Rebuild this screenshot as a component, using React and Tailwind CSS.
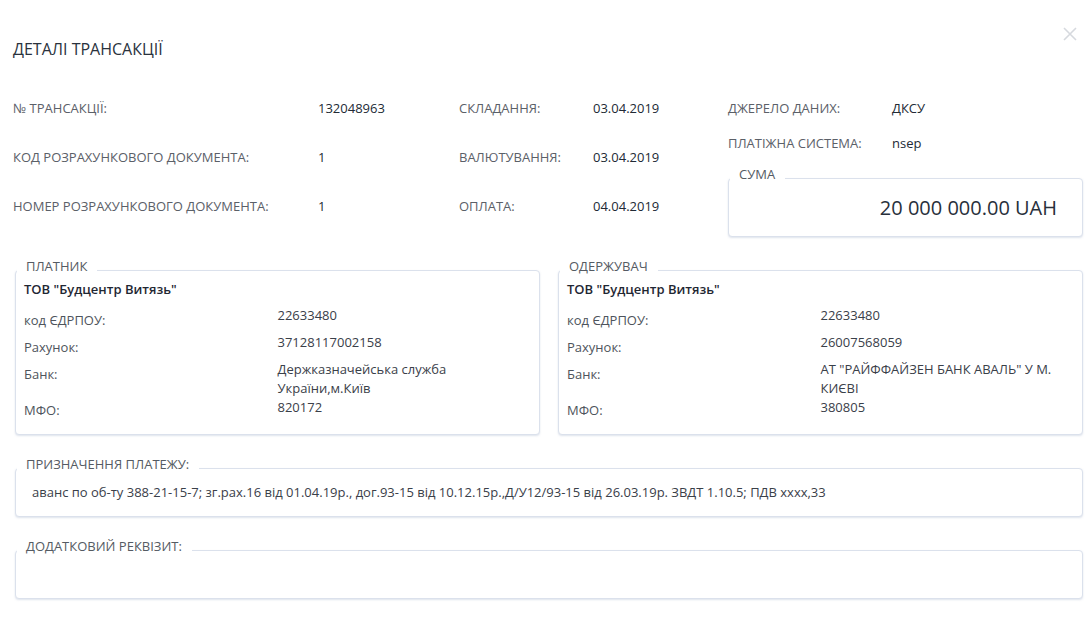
import React from "react";

const font = { fontFamily: "'Open Sans', 'Noto Sans', sans-serif" };

// boxed group with a caption over the top border
const Box = ({ title, className = "", children }) => (
  <div className={`relative rounded-[4px] border border-[#dbe1ec] shadow-[0_1px_2px_rgba(160,175,200,0.35)] bg-white ${className}`}>
    <span className="absolute -top-[14px] left-[1px] bg-white pl-[9px] pr-[10px] text-[13px] leading-[19px] text-[#555b63]">
      {title}
    </span>
    {children}
  </div>
);

const TopRow = ({ label, value, labelW, h = "h-[49px]" }) => (
  <div className={`flex items-center ${h}`}>
    <span className={`${labelW} shrink-0 text-[13px] text-[#5b6068]`}>{label}</span>
    <span className="text-[13px] text-[#222a35]">{value}</span>
  </div>
);

const Party = ({ title, name, rows }) => (
  <Box title={title} className="flex-1 h-[165px] pt-[9px] px-[8px]">
    <div className="text-[13px] leading-[19px] font-semibold text-[#1f2733]">{name}</div>
    <div className="mt-[7px]">
      {rows.map((r, i) => (
        <div key={i} className={`grid grid-cols-2 ${r.h}`}>
          <span className={`text-[13px] leading-[19px] text-[#4e545c] ${r.pt}`}>{r.label}</span>
          <span className="text-[13px] leading-[19px] text-[#3a4049]">{r.value}</span>
        </div>
      ))}
    </div>
  </Box>
);

const App = () => {
  return (
    <div className="w-[1089px] h-[625px] bg-white relative" style={font}>
      {/* close */}
      <button className="absolute right-[12px] top-[27px] text-[#d6d9de]">
        <svg width="14" height="14" viewBox="0 0 14 14" stroke="currentColor" strokeWidth="1.6">
          <path d="M1 1 L13 13 M13 1 L1 13" />
        </svg>
      </button>

      <div className="pt-[39px] pl-[13px] text-[16px] leading-[20px] text-[#2a323d]">ДЕТАЛІ ТРАНСАКЦІЇ</div>

      {/* summary */}
      <div className="flex items-start mt-[26px] pl-[13px] pr-[6px]">
        <div className="w-[446px]">
          <TopRow label="№ ТРАНСАКЦІЇ:" value="132048963" labelW="w-[305px]" h="h-[48px]" />
          <TopRow label="КОД РОЗРАХУНКОВОГО ДОКУМЕНТА:" value="1" labelW="w-[305px]" h="h-[49px]" />
          <TopRow label="НОМЕР РОЗРАХУНКОВОГО ДОКУМЕНТА:" value="1" labelW="w-[305px]" h="h-[50px]" />
        </div>
        <div className="w-[268px]">
          <TopRow label="СКЛАДАННЯ:" value="03.04.2019" labelW="w-[134px]" h="h-[48px]" />
          <TopRow label="ВАЛЮТУВАННЯ:" value="03.04.2019" labelW="w-[134px]" h="h-[49px]" />
          <TopRow label="ОПЛАТА:" value="04.04.2019" labelW="w-[134px]" h="h-[50px]" />
        </div>
        <div className="flex-1 pl-[1px]">
          <TopRow label="ДЖЕРЕЛО ДАНИХ:" value="ДКСУ" labelW="w-[164px]" h="h-[48px]" />
          <TopRow label="ПЛАТІЖНА СИСТЕМА:" value="nsep" labelW="w-[164px]" h="h-[22px]" />
          <Box title="СУМА" className="mt-[23px] h-[59px] flex items-center justify-end pr-[25px]">
            <span className="text-[20px] text-[#28303b]">20 000 000.00 UAH</span>
          </Box>
        </div>
      </div>

      {/* parties */}
      <div className="flex gap-[18px] mt-[33px] pl-[15px] pr-[6px]">
        <Party
          title="ПЛАТНИК"
          name='ТОВ "Будцентр Витязь"'
          rows={[
            { label: "код ЄДРПОУ:", value: "22633480", h: "h-[27px]", pt: "pt-[5px]" },
            { label: "Рахунок:", value: "37128117002158", h: "h-[27px]", pt: "pt-[5px]" },
            { label: "Банк:", value: "Держказначейська служба України,м.Київ", h: "h-[38px]", pt: "pt-[5px]" },
            { label: "МФО:", value: "820172", h: "h-[27px]", pt: "pt-[3px]" },
          ]}
        />
        <Party
          title="ОДЕРЖУВАЧ"
          name='ТОВ "Будцентр Витязь"'
          rows={[
            { label: "код ЄДРПОУ:", value: "22633480", h: "h-[27px]", pt: "pt-[5px]" },
            { label: "Рахунок:", value: "26007568059", h: "h-[27px]", pt: "pt-[5px]" },
            { label: "Банк:", value: 'АТ "РАЙФФАЙЗЕН БАНК АВАЛЬ" У М. КИЄВІ', h: "h-[38px]", pt: "pt-[5px]" },
            { label: "МФО:", value: "380805", h: "h-[27px]", pt: "pt-[3px]" },
          ]}
        />
      </div>

      {/* purpose */}
      <div className="pl-[15px] pr-[6px]">
        <Box title="ПРИЗНАЧЕННЯ ПЛАТЕЖУ:" className="mt-[33px] h-[49px] flex items-center pl-[16px]">
          <span className="text-[13px] text-[#3a4049]">
            аванс по об-ту 388-21-15-7; зг.рах.16 від 01.04.19р., дог.93-15 від 10.12.15р.,Д/У12/93-15 від 26.03.19р. ЗВДТ 1.10.5; ПДВ xxxx,33
          </span>
        </Box>
        <Box title="ДОДАТКОВИЙ РЕКВІЗИТ:" className="mt-[33px] h-[49px]" />
      </div>
    </div>
  );
};

export default App;
